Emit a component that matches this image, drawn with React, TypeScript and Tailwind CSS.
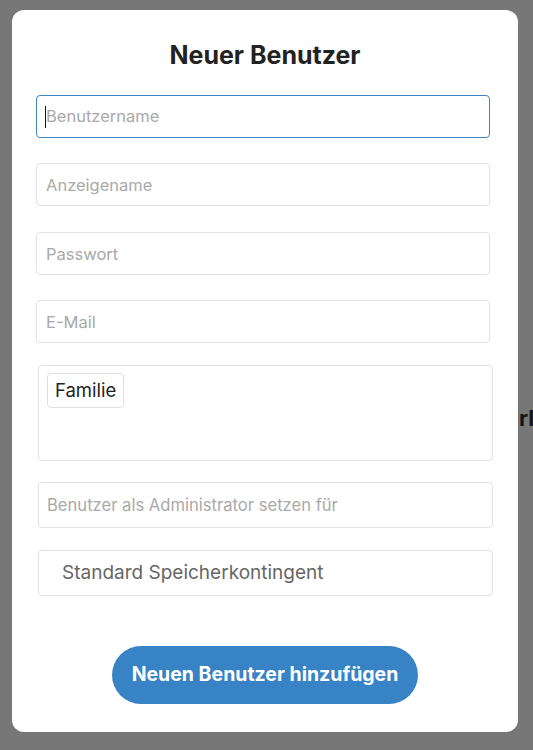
const font = { fontFamily: 'Inter, "Noto Sans", "Liberation Sans", sans-serif' };

function Field({ placeholder }: { placeholder: string }) {
  return (
    <input
      readOnly
      placeholder={placeholder}
      className="block h-[43px] w-[454px] rounded-[4px] border border-[#e2e2e2] bg-white px-[9px] text-[16.5px] text-[#222] outline-none placeholder:text-[#a9a9a9]"
    />
  );
}

export default function App() {
  return (
    <div className="relative h-[750px] w-full overflow-hidden bg-[#777777]" style={font}>
      {/* page text peeking out behind the dialog */}
      <span className="absolute left-[519px] top-[403px] text-[22px] font-bold leading-[30px] text-[#151515]">
        rl
      </span>

      <div className="relative ml-[12px] mt-[10px] flex h-[722px] w-[506px] flex-col rounded-[12px] bg-white px-[24px] pt-[30px]">
        <h2 className="h-[30px] text-center text-[25px] font-bold leading-[30px] text-[#222]">
          Neuer Benutzer
        </h2>

        {/* focused username field */}
        <div className="mt-[25px] flex h-[43px] w-[454px] items-center rounded-[4px] border border-[#3d85c6] bg-white px-[8px]">
          <span className="h-[22px] w-px bg-[#111]" />
          <span className="text-[16.5px] text-[#a9a9a9]">Benutzername</span>
        </div>

        <div className="mt-[25px]">
          <Field placeholder="Anzeigename" />
        </div>
        <div className="mt-[26px]">
          <Field placeholder="Passwort" />
        </div>
        <div className="mt-[25px]">
          <Field placeholder="E-Mail" />
        </div>

        <div className="ml-[2px] mt-[22px] flex h-[96px] w-[455px] items-start rounded-[4px] border border-[#e2e2e2] px-[8px] pt-[7px]">
          <span className="flex h-[35px] items-center rounded-[4px] border border-[#dedede] px-[7px] text-[18.5px] text-[#222]">
            Familie
          </span>
        </div>

        <div className="ml-[2px] mt-[21px] flex h-[46px] w-[455px] items-center rounded-[4px] border border-[#e2e2e2] px-[8px] text-[16.6px] text-[#a9a9a9]">
          Benutzer als Administrator setzen für
        </div>

        <div className="ml-[2px] mt-[22px] flex h-[46px] w-[455px] items-center rounded-[4px] border border-[#e2e2e2] pl-[23px] text-[19px] text-[#666]">
          Standard Speicherkontingent
        </div>

        <div className="mt-[50px] flex justify-center">
          <button className="h-[58px] w-[306px] rounded-full bg-[#3783c5] text-[19.5px] font-bold text-white">
            Neuen Benutzer hinzufügen
          </button>
        </div>
      </div>
    </div>
  );
}
